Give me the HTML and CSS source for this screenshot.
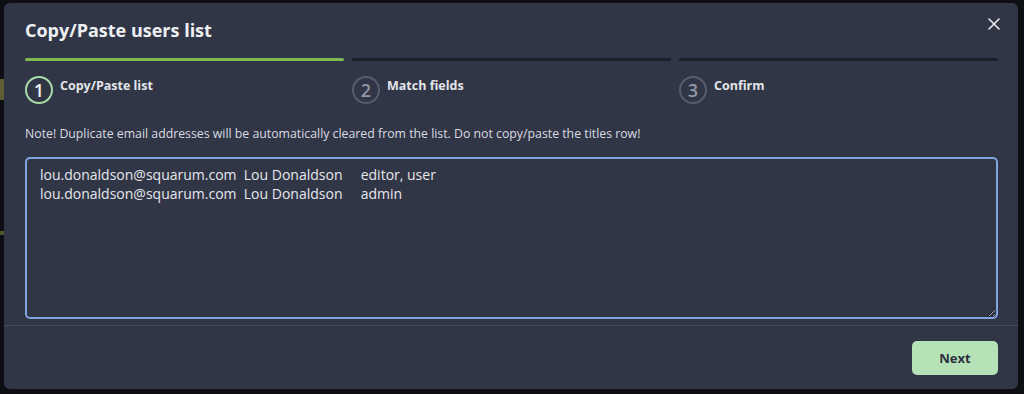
FILE: index.html
```html
<!DOCTYPE html>
<html lang="en">
<head>
  <meta charset="UTF-8" />
  <title>Copy/Paste users list</title>
  <link rel="stylesheet" href="styles.css">
</head>
<body>

  <!-- page behind the modal -->
  <div class="backdrop-bit bit-a"></div>
  <div class="backdrop-bit bit-b"></div>

  <div class="modal">
    <div class="modal-body">
      <div class="modal-head">
        <h1>Copy/Paste users list</h1>
        <button class="close" aria-label="Close">
          <svg width="12" height="12" viewBox="0 0 12 12"><path d="M1 1 L11 11 M11 1 L1 11" stroke="#e8e8ec" stroke-width="1.6" stroke-linecap="round" fill="none"/></svg>
        </button>
      </div>

      <!-- Steps -->
      <div class="steps">
        <div class="step active">
          <div class="bar"></div>
          <div class="step-info"><span class="num">1</span><span class="step-label">Copy/Paste list</span></div>
        </div>
        <div class="step">
          <div class="bar"></div>
          <div class="step-info"><span class="num">2</span><span class="step-label">Match fields</span></div>
        </div>
        <div class="step">
          <div class="bar"></div>
          <div class="step-info"><span class="num">3</span><span class="step-label">Confirm</span></div>
        </div>
      </div>

      <p class="note">Note! Duplicate email addresses will be automatically cleared from the list. Do not copy/paste the titles row!</p>

      <textarea class="paste" spellcheck="false">lou.donaldson@squarum.com  Lou Donaldson     editor, user
lou.donaldson@squarum.com  Lou Donaldson     admin</textarea>
    </div>

    <div class="modal-foot">
      <button class="btn-next">Next</button>
    </div>
  </div>

</body>
</html>
```

FILE: styles.css
```css
body {
  margin: 0;
  padding: 3px 6px 5px 4px;
  background-color: #0e0f13;
  font-family: 'Open Sans', 'Noto Sans', sans-serif;
  color: #e9eaee;
  height: 394px;
  box-sizing: border-box;
  overflow: hidden;
  position: relative;
}

.backdrop-bit {
  position: absolute;
  left: 0;
  width: 4px;
  background: #5f5e33;
}
.bit-a { top: 79px; height: 21px; }
.bit-b { top: 231px; height: 4px; background: #4a5a2c; }

/* --- Modal --- */
.modal {
  background: #313647;
  border-radius: 6px;
  height: 386px;
  display: flex;
  flex-direction: column;
}
.modal-body {
  padding: 14px 20px 6px 21px;
}
.modal-head {
  display: flex;
  justify-content: space-between;
  align-items: flex-start;
}
h1 {
  margin: 0;
  font-size: 18px;
  line-height: 26px;
  font-weight: 700;
  color: #eef0f3;
}
.close {
  background: none;
  border: 0;
  padding: 0;
  margin: 1px -2px 0 0;
  width: 12px;
  height: 12px;
  line-height: 0;
}

.steps {
  display: flex;
  gap: 8px;
  margin-top: 15px;
}
.step {
  flex: 1;
}
.bar {
  height: 3px;
  border-radius: 2px;
  background: #1d1f28;
}
.step.active .bar {
  background: #7fb753;
}
.step-info {
  display: flex;
  align-items: flex-start;
  margin-top: 15px;
}
.num {
  width: 24px;
  height: 24px;
  border: 2px solid #575c6b;
  border-radius: 50%;
  display: flex;
  align-items: center;
  justify-content: center;
  font-size: 18px;
  font-weight: 600;
  color: #9297a4;
  flex-shrink: 0;
}
.step.active .num {
  border-color: #a9dca9;
  color: #f2f3f5;
}
.step-label {
  margin-left: 7px;
  margin-top: 1px;
  font-size: 12.5px;
  font-weight: 700;
  line-height: 18px;
  color: #eceef1;
}
.step .step-label { color: #e3e5ea; }

.note {
  margin: 21px 0 14px;
  font-size: 12.3px;
  line-height: 18px;
  color: #d9dbe0;
}

.paste {
  display: block;
  width: 100%;
  height: 162px;
  box-sizing: border-box;
  margin: 0;
  padding: 6px 13px;
  background: #313647;
  border: 2px solid #7ea5df;
  border-radius: 5px;
  outline: none;
  color: #e6e7eb;
  font-family: 'Open Sans', 'Noto Sans', sans-serif;
  font-size: 14px;
  line-height: 19px;
  white-space: pre;
  resize: both;
}

.modal-foot {
  border-top: 1px solid #474c5c;
  padding: 15px 20px 0 21px;
  display: flex;
  justify-content: flex-end;
}
.btn-next {
  width: 86px;
  height: 34px;
  border: 0;
  border-radius: 5px;
  background: #b6e2b7;
  color: #2b3040;
  font-family: 'Open Sans', 'Noto Sans', sans-serif;
  font-size: 13px;
  font-weight: 700;
}
```
